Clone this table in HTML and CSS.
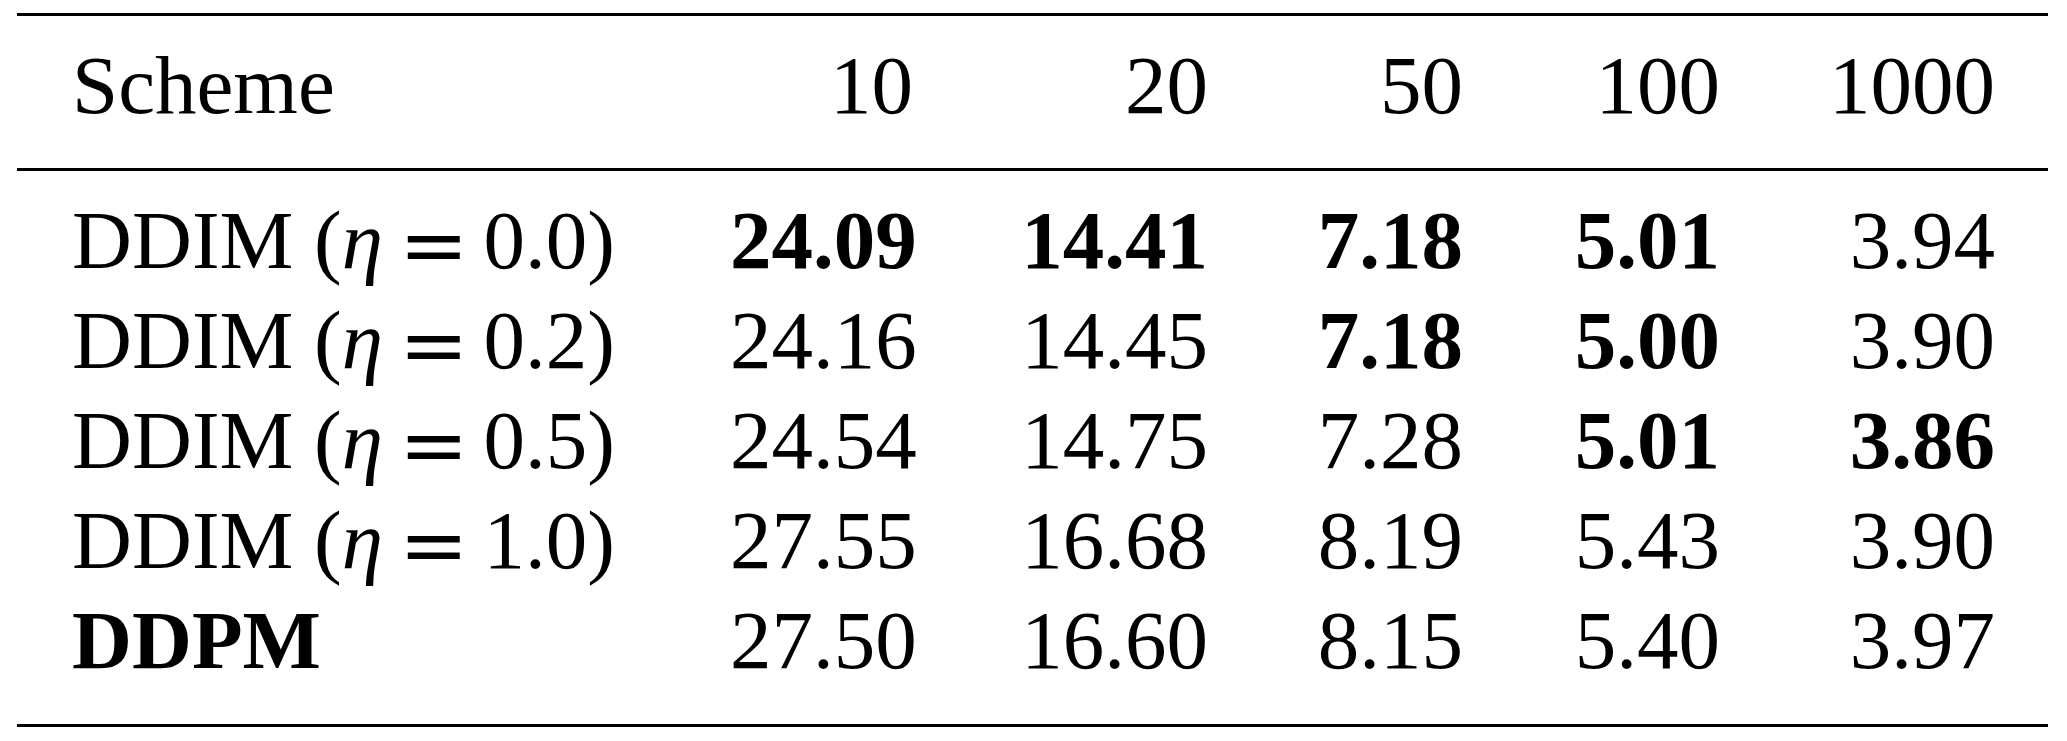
FILE: index.html
```html
<html>
  <head>
    <title>Sampling steps table</title>
    <meta name="viewport" content="width=device-width, initial-scale=1">
    <link rel="stylesheet" href="styles.css">
  </head>
  <body>
    <div class="tbl">
      <div class="head">
        <div class="row">
          <div class="cell">Scheme</div>
          <div class="cell num">10</div>
          <div class="cell num">20</div>
          <div class="cell num">50</div>
          <div class="cell num">100</div>
          <div class="cell num">1000</div>
        </div>
      </div>
      <div class="body">
        <div class="row">
          <div class="cell">DDIM (<i class="eta">η</i><span class="eq">=</span>0.0)</div>
          <div class="cell num best">24.09</div>
          <div class="cell num best">14.41</div>
          <div class="cell num best">7.18</div>
          <div class="cell num best">5.01</div>
          <div class="cell num">3.94</div>
        </div>
        <div class="row">
          <div class="cell">DDIM (<i class="eta">η</i><span class="eq">=</span>0.2)</div>
          <div class="cell num">24.16</div>
          <div class="cell num">14.45</div>
          <div class="cell num best">7.18</div>
          <div class="cell num best">5.00</div>
          <div class="cell num">3.90</div>
        </div>
        <div class="row">
          <div class="cell">DDIM (<i class="eta">η</i><span class="eq">=</span>0.5)</div>
          <div class="cell num">24.54</div>
          <div class="cell num">14.75</div>
          <div class="cell num">7.28</div>
          <div class="cell num best">5.01</div>
          <div class="cell num best">3.86</div>
        </div>
        <div class="row">
          <div class="cell">DDIM (<i class="eta">η</i><span class="eq">=</span>1.0)</div>
          <div class="cell num">27.55</div>
          <div class="cell num">16.68</div>
          <div class="cell num">8.19</div>
          <div class="cell num">5.43</div>
          <div class="cell num">3.90</div>
        </div>
        <div class="row">
          <div class="cell best">DDPM</div>
          <div class="cell num">27.50</div>
          <div class="cell num">16.60</div>
          <div class="cell num">8.15</div>
          <div class="cell num">5.40</div>
          <div class="cell num">3.97</div>
        </div>
      </div>
    </div>
  </body>
</html>
```

FILE: styles.css
```css
* { box-sizing: border-box; }
body {
  margin: 0;
  background: #fff;
  color: #000;
  font-family: "Liberation Serif", "Times New Roman", serif;
  font-size: 83px;
  line-height: 100px;
}

.tbl {
  margin: 13px 0 0 17px;
  width: 2031px;
  border-top: 3px solid #000;
  border-bottom: 3px solid #000;
}

.head {
  padding: 19px 0 33px;
  border-bottom: 3px solid #000;
}

.body {
  padding: 19px 0 34px;
}

.row {
  display: grid;
  grid-template-columns: 658px 183px 295px 255px 257px 275px;
  height: 100px;
  padding: 0 53px 0 55px;
}

.cell {
  white-space: nowrap;
}

.num {
  text-align: right;
}

.best {
  font-weight: bold;
}

.eta {
  font-style: italic;
}

.eq {
  font-family: "DejaVu Serif", serif;
  line-height: 0;
  vertical-align: -5px;
  margin: 0 15px 0 16px;
}
```
